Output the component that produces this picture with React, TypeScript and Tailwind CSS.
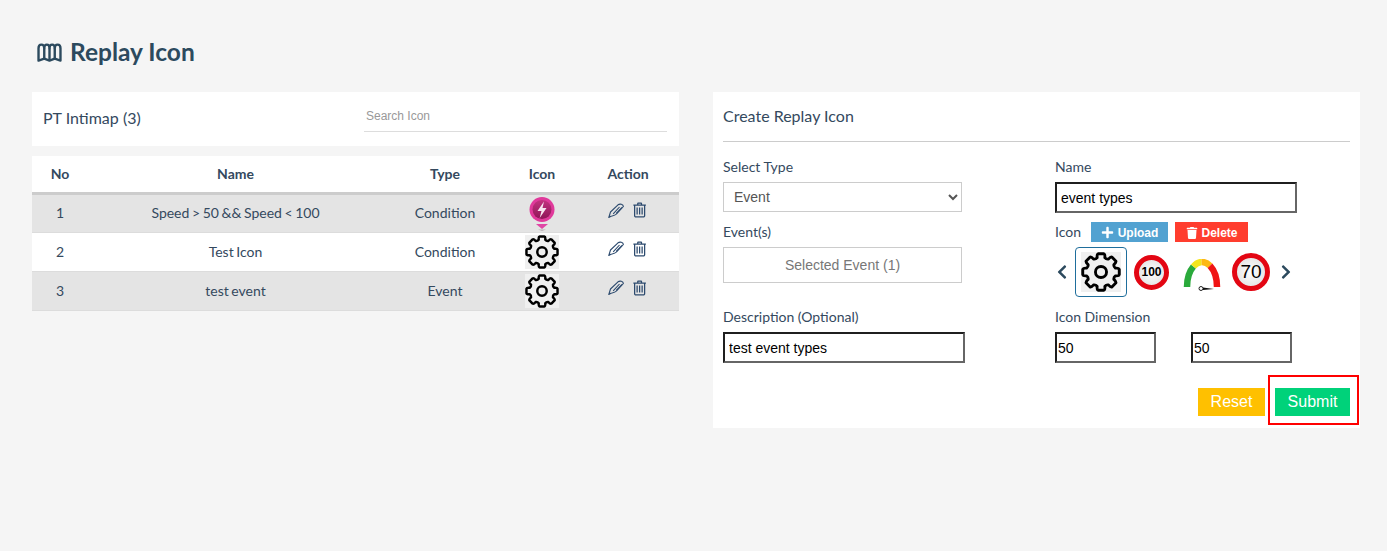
import { FaChevronLeft, FaChevronRight, FaPlus, FaTrash } from "react-icons/fa";
import { LiaTrashAltSolid } from "react-icons/lia";

const rows = [
  { no: 1, name: "Speed > 50 && Speed < 100", type: "Condition", icon: "pin" },
  { no: 2, name: "Test Icon", type: "Condition", icon: "gear" },
  { no: 3, name: "test event", type: "Event", icon: "gear" },
];

// 8 tanden, gebogen tussen de tanden
const gearPath = () => {
  const pt = (deg: number, r: number) => {
    const a = ((deg - 90) * Math.PI) / 180;
    return `${(18 + r * Math.cos(a)).toFixed(2)} ${(18 + r * Math.sin(a)).toFixed(2)}`;
  };
  let d = "";
  for (let i = 0; i < 8; i++) {
    const a = i * 45;
    d += `${i === 0 ? "M" : "L"}${pt(a - 15, 13.4)} Q${pt(a - 13, 16.6)} ${pt(a - 8, 16.6)} L${pt(a + 8, 16.6)} Q${pt(a + 13, 16.6)} ${pt(a + 15, 13.4)} Q${pt(a + 22.5, 12.2)} ${pt(a + 30, 13.4)} `;
  }
  return d + "Z";
};

const Gear = ({ size = 34 }: { size?: number }) => (
  <div className="flex items-center justify-center bg-[#f0f0f0]" style={{ width: size, height: size }}>
    <svg width={size} height={size} viewBox="0 0 36 36" fill="none" stroke="#000" strokeWidth="2.600" strokeLinejoin="round">
      <path d={gearPath()} />
      <circle cx="18" cy="18" r="5" />
    </svg>
  </div>
);

const Pin = () => (
  <svg width="28" height="36" viewBox="0 0 28 36" className="mt-[2px]">
    <defs>
      <linearGradient id="pinDisc" x1="0" y1="0" x2="0" y2="1">
        <stop offset="0" stopColor="#c2337f" />
        <stop offset="1" stopColor="#8f1558" />
      </linearGradient>
    </defs>
    <circle cx="14" cy="13.500" r="12.500" fill="#e0399b" />
    <circle cx="14" cy="13.500" r="9.500" fill="url(#pinDisc)" />
    <path d="M16 5.500 9.500 15h4l-1.800 7L18.500 12h-4z" fill="#f7e6f0" />
    <path d="M8 28h12l-6 5z" fill="#e046a5" />
    <path d="M10 33.500h8l-4 1.500z" fill="#b9b0b5" />
  </svg>
);

const Pen = () => (
  <svg width="16" height="15" viewBox="0 0 16 15" fill="none" stroke="#2c4a6e" strokeWidth="1.100" strokeLinejoin="round">
    <path d="M.8 14.500 2.500 9 10 1.800C12 .4 15.200 1.200 15.400 3.500L8.500 11C6.800 12.800 4.500 12.800 3 13.200z" />
    <path d="M5.200 10.800 11.500 4M8.200 10.500 14 4.500" />
  </svg>
);

const Speed = ({ label, size, bold }: { label: string; size: number; bold?: boolean }) => (
  <div
    className={`flex items-center justify-center rounded-full border-[5px] border-[#e30613] bg-[radial-gradient(circle,#ffffff,#dddddd)] font-['Liberation_Sans',sans-serif] text-black ${bold ? "font-bold" : "font-normal"}`}
    style={{ width: size, height: size, fontSize: bold ? 12 : 19 }}
  >
    {label}
  </div>
);

const Gauge = () => (
  <svg width="38" height="34" viewBox="0 0 38 34" fill="none" strokeWidth="6.500">
    <path d="M4 28A15 25 0 0 1 10.400 7.500" stroke="#2aaa3b" />
    <path d="M10.400 7.500A15 25 0 0 1 18.500 3" stroke="#f4e61c" />
    <path d="M18.500 3A15 25 0 0 1 27 6.800" stroke="#fdb813" />
    <path d="M27 6.800A15 25 0 0 1 34 28" stroke="#f01414" />
    <circle cx="18" cy="29.500" r="2" stroke="#222" strokeWidth="1" fill="#fff" />
    <path d="M20 28.500 31 30 20 31z" fill="#111" />
  </svg>
);

const Label = ({ children }: { children: React.ReactNode }) => (
  <label className="block text-sm leading-5 text-[#34495e]">{children}</label>
);

const inputCls =
  "block h-[31px] border-2 border-t-[#1f1f1f] border-l-[#1f1f1f] border-r-[#666] border-b-[#666] bg-white px-1 font-['Liberation_Sans',sans-serif] text-sm text-black outline-none";

export default function App() {
  return (
    <div className="min-h-[551px] bg-[#f5f5f5] pl-8 pr-[27px] pt-[36px] font-['Lato',sans-serif] text-[#34495e]">
      <h1 className="flex items-center gap-[8px] pl-[5px] text-[24.500px] font-bold leading-8 text-[#2c4a5e]">
        <svg width="25" height="21" viewBox="0 0 26 22" fill="none" stroke="#2c4a5e" strokeWidth="2.500" strokeLinejoin="round">
          <path d="M1.500 6.500C1.500 1.500 7.500 1.500 7.500 6.500 7.500 1.500 13 1.500 13 6.500 13 1.500 18.500 1.500 18.500 6.500 18.500 1.500 24.500 1.500 24.500 6.500V19.500L18.500 17.500 13 19.500 7.500 17.500 1.500 19.500z" />
          <path d="M7.500 6.500v11M13 6.500v13M18.500 6.500v11" />
        </svg>
        Replay Icon
      </h1>

      <div className="mt-[24px] flex gap-[34px]">
        <div className="w-[647px] shrink-0">
          <div className="flex h-[54px] items-center justify-between bg-white pl-[11px] pr-3">
            <span className="pb-[2px] text-base">PT Intimap (3)</span>
            <input
              placeholder="Search Icon"
              className="mb-[6px] h-[32px] w-[303px] border-b border-[#ddd] px-[2px] font-['Liberation_Sans',sans-serif] text-xs outline-none placeholder:text-[#999]"
            />
          </div>

          <table className="mt-[10px] w-full table-fixed border-collapse bg-white text-sm">
            <colgroup>
              <col className="w-[56px]" />
              <col className="w-[295px]" />
              <col className="w-[124px]" />
              <col className="w-[70px]" />
              <col />
            </colgroup>
            <thead>
              <tr className="h-[37px] border-b-[3px] border-[#ccc] font-bold">
                <th>No</th>
                <th>Name</th>
                <th>Type</th>
                <th>Icon</th>
                <th>Action</th>
              </tr>
            </thead>
            <tbody>
              {rows.map((r, i) => (
                <tr key={r.no} className={`h-[39px] border-b border-[#dcdcdc] ${i % 2 === 0 ? "bg-[#e4e4e4]" : "bg-white"}`}>
                  <td className="text-center">{r.no}</td>
                  <td className="text-center [word-spacing:-1px]">{r.name}</td>
                  <td className="text-center">{r.type}</td>
                  <td>
                    <div className="flex h-[36px] items-center justify-center">
                      {r.icon === "pin" ? <Pin /> : <Gear />}
                    </div>
                  </td>
                  <td>
                    <div className="flex items-center justify-center gap-[5px] pb-1.5">
                      <Pen />
                      <LiaTrashAltSolid size={20} color="#2c4a6e" />
                    </div>
                  </td>
                </tr>
              ))}
            </tbody>
          </table>
        </div>

        <div className="h-[336px] w-[647px] shrink-0 bg-white px-[10px]">
          <div className="flex h-[50px] items-center border-b border-[#ccc] pb-[2px] text-base">Create Replay Icon</div>
          <div className="mt-[15px] flex">
            <div className="w-[332px]">
              <Label>Select Type</Label>
              <select className="mt-[5px] block h-[30px] w-[239px] border border-[#ccc] bg-white pl-[6px] font-['Liberation_Sans',sans-serif] text-sm text-[#555] outline-none">
                <option>Event</option>
              </select>
              <div className="mt-[10px]">
                <Label>Event(s)</Label>
              </div>
              <div className="mt-[5px] flex h-[36px] w-[239px] items-center justify-center border border-[#ccc] font-['Liberation_Sans',sans-serif] text-sm text-[#777]">
                Selected Event (1)
              </div>
              <div className="mt-[24px]">
                <Label>Description (Optional)</Label>
              </div>
              <input readOnly value="test event types" className={`${inputCls} mt-[5px] w-[242px]`} />
            </div>

            <div className="flex-1">
              <Label>Name</Label>
              <input readOnly value="event types" className={`${inputCls} mt-[5px] w-[242px]`} />
              <div className="mt-[9px] flex items-center">
                <Label>Icon</Label>
                <span className="ml-[10px] flex h-5 w-[77px] items-center justify-center gap-[4px] bg-[#52a2d1] pt-[1px] font-['Liberation_Sans',sans-serif] text-xs font-bold text-white">
                  <FaPlus size={13} />
                  Upload
                </span>
                <span className="ml-[7px] flex h-5 w-[73px] items-center justify-center gap-[4px] bg-[#ff3d2e] pt-[1px] font-['Liberation_Sans',sans-serif] text-xs font-bold text-white">
                  <FaTrash size={12} />
                  Delete
                </span>
              </div>
              <div className="mt-[5px] flex h-[50px] items-center">
                <div className="-ml-[1px] w-[21px]">
                  <FaChevronLeft size={16} color="#2c4a5e" />
                </div>
                <div className="flex h-[50px] w-[52px] items-center justify-center rounded border border-[#1f6e9c]">
                  <Gear size={40} />
                </div>
                <div className="ml-[7px]">
                  <Speed label="100" size={35} bold />
                </div>
                <div className="ml-[14px] mt-[8px]">
                  <Gauge />
                </div>
                <div className="ml-[11px]">
                  <Speed label="70" size={38} />
                </div>
                <div className="ml-[8px]">
                  <FaChevronRight size={16} color="#2c4a5e" />
                </div>
              </div>
              <div className="mt-[10px]">
                <Label>Icon Dimension</Label>
              </div>
              <div className="mt-[5px] flex gap-[35px]">
                <input readOnly value="50" className={`${inputCls} w-[101px] !px-[1px]`} />
                <input readOnly value="50" className={`${inputCls} w-[101px] !px-[1px]`} />
              </div>
            </div>
          </div>

          <div className="mt-[25px] flex justify-end">
            <button className="h-[28px] w-[67px] bg-[#ffc000] font-['Liberation_Sans',sans-serif] text-base text-white">Reset</button>
            <div className="relative ml-[10px]">
              <button className="block h-[28px] w-[75px] bg-[#00d27a] font-['Liberation_Sans',sans-serif] text-base text-white">Submit</button>
              <div className="absolute -left-[7px] -top-[13px] h-[50px] w-[91px] border-2 border-[#f00]" />
            </div>
          </div>
        </div>
      </div>
    </div>
  );
}
